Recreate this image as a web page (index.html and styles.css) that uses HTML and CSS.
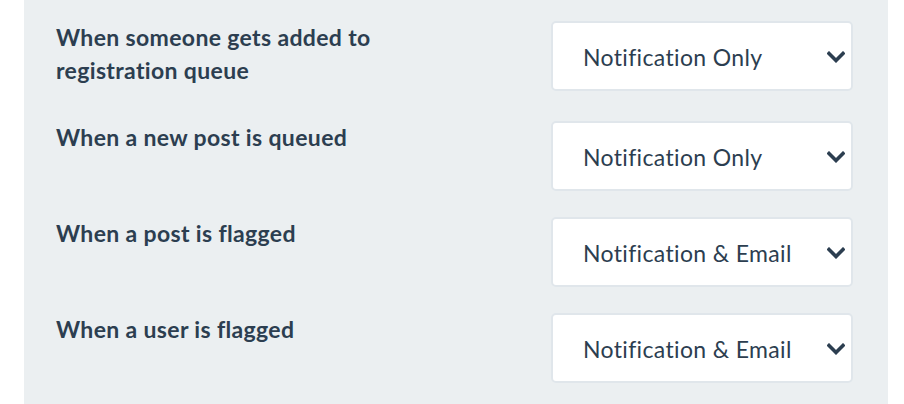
FILE: index.html
```html
<!DOCTYPE html>
<html lang="en">
<head>
<meta charset="utf-8">
<title>Notification settings</title>
<link rel="stylesheet" href="styles.css">
</head>
<body>
<div class="panel">
  <div class="row">
    <div class="label">When someone gets added to registration queue</div>
    <div class="select" role="combobox">
      <span class="value">Notification Only</span>
      <svg class="chev" width="18" height="12" viewBox="0 0 18 12"><polyline points="2,2.5 9,9.5 16,2.5" fill="none" stroke="#2c3e50" stroke-width="3.6" stroke-linecap="square" stroke-linejoin="miter"/></svg>
    </div>
  </div>
  <div class="row">
    <div class="label">When a new post is queued</div>
    <div class="select" role="combobox">
      <span class="value">Notification Only</span>
      <svg class="chev" width="18" height="12" viewBox="0 0 18 12"><polyline points="2,2.5 9,9.5 16,2.5" fill="none" stroke="#2c3e50" stroke-width="3.6" stroke-linecap="square" stroke-linejoin="miter"/></svg>
    </div>
  </div>
  <div class="row">
    <div class="label">When a post is flagged</div>
    <div class="select" role="combobox">
      <span class="value">Notification &amp; Email</span>
      <svg class="chev" width="18" height="12" viewBox="0 0 18 12"><polyline points="2,2.5 9,9.5 16,2.5" fill="none" stroke="#2c3e50" stroke-width="3.6" stroke-linecap="square" stroke-linejoin="miter"/></svg>
    </div>
  </div>
  <div class="row">
    <div class="label">When a user is flagged</div>
    <div class="select" role="combobox">
      <span class="value">Notification &amp; Email</span>
      <svg class="chev" width="18" height="12" viewBox="0 0 18 12"><polyline points="2,2.5 9,9.5 16,2.5" fill="none" stroke="#2c3e50" stroke-width="3.6" stroke-linecap="square" stroke-linejoin="miter"/></svg>
    </div>
  </div>
</div>
</body>
</html>
```
FILE: styles.css
```css
html, body {
  margin: 0;
  padding: 0;
  background: #ffffff;
}
body {
  font-family: Lato, "Open Sans", sans-serif;
  color: #2c3e50;
}
.panel {
  margin-left: 24px;
  width: 864px;
  height: 404px;
  box-sizing: border-box;
  background: #ebeff1;
  padding: 21px 35px 0 32px;
}
.row {
  display: flex;
  justify-content: space-between;
  align-items: flex-start;
  margin-bottom: 26px;
}
.label {
  width: 340px;
  font-size: 23px;
  font-weight: 700;
  line-height: 33px;
  letter-spacing: 0.35px;
  padding-bottom: 8px;
}
.select {
  width: 302px;
  height: 70px;
  box-sizing: border-box;
  background: #ffffff;
  border: 2px solid #e0e6eb;
  border-radius: 5px;
  padding: 2px 6px 0 30px;
  display: flex;
  align-items: center;
  justify-content: space-between;
  font-size: 23px;
  font-weight: 400;
  letter-spacing: 0.35px;
  font-variant-ligatures: none;
}
.chev {
  display: block;
}
```
